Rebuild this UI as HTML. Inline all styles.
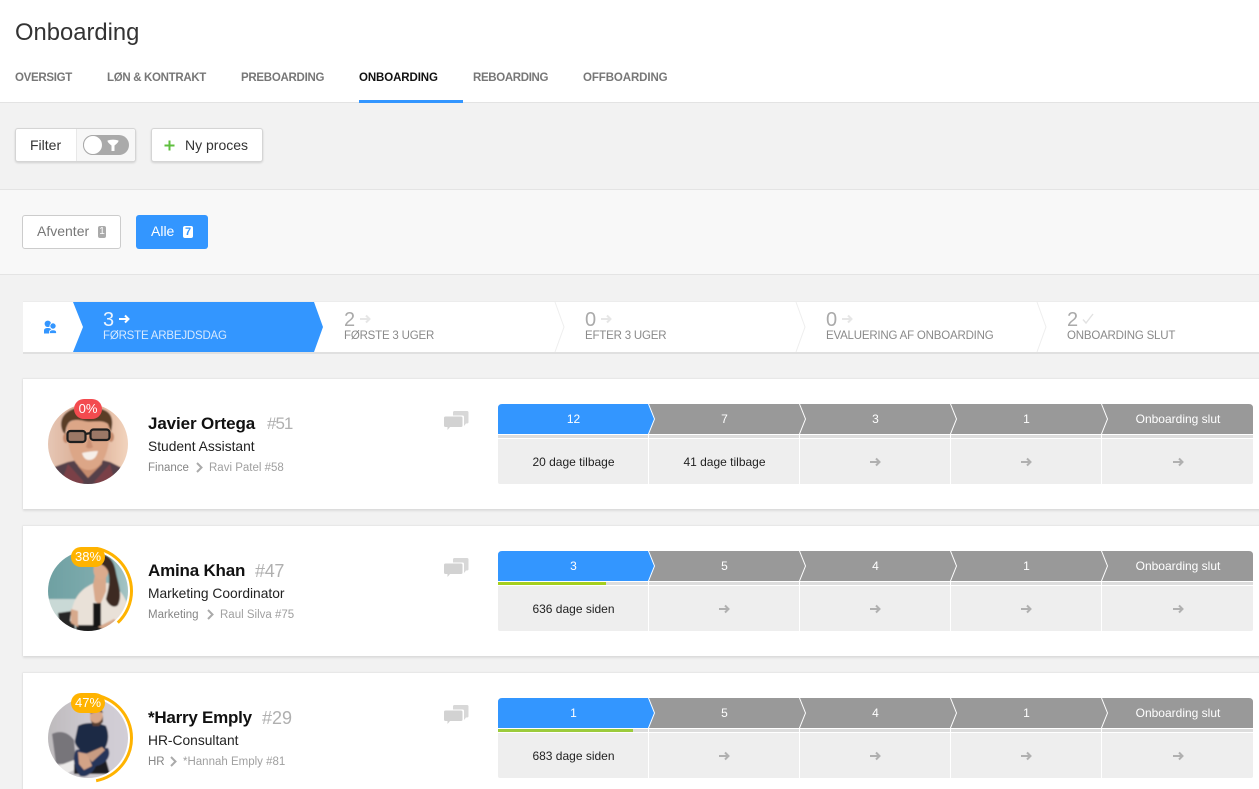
<!DOCTYPE html>
<html lang="da"><head><meta charset="utf-8"><title>Onboarding</title>
<style>
*{box-sizing:border-box}
html,body{margin:0;padding:0;width:1259px;height:789px;overflow:hidden}
body{background:#f2f2f2;font-family:"Liberation Sans",Arial,sans-serif;color:#222}
#w{position:relative;width:1259px;height:789px;overflow:hidden;background:#f2f2f2}
.a{position:absolute;white-space:nowrap}
.tab{top:71px;height:14px;line-height:14px;font-size:11.5px;font-weight:bold;color:#777}
.btn{background:#fff;border:1px solid #d5d5d5;border-radius:3px;box-shadow:0 1px 2px rgba(0,0,0,.14)}
.st{top:310px;font-size:20px;line-height:20px;color:#aaa}
.sl{top:329px;font-size:11.5px;line-height:14px;color:#8a8a8a;letter-spacing:-.2px}
.card{left:23px;width:1240px;height:131px;background:#fff;border-top:1px solid #e8e8e8;box-shadow:0 2px 2px rgba(0,0,0,.09),-1px 0 1px rgba(0,0,0,.04)}
.nm{font-size:17px;font-weight:bold;line-height:20px;color:#111;letter-spacing:-.12px}
.id{font-size:18px;line-height:20px;color:#b0b0b0;letter-spacing:-.3px}
.ti{font-size:13.8px;line-height:18px;color:#222}
.bc{font-size:11.5px;line-height:14px;color:#a0a0a0}
.bd{color:#858585}
.pc{font-size:13px;line-height:20px;color:#fff;text-align:center}
</style></head><body><div id="w">

<div class="a" style="left:0;top:0;width:1259px;height:103px;background:#fff;border-bottom:1px solid #e3e3e3"></div>
<div class="a" style="left:15px;top:19px;font-size:23.800px;line-height:28px;color:#333">Onboarding</div>
<div class="a tab" style="left:15px;letter-spacing:-.3px">OVERSIGT</div>
<div class="a tab" style="left:107px;letter-spacing:-.32px">LØN &amp; KONTRAKT</div>
<div class="a tab" style="left:241px;letter-spacing:-.28px">PREBOARDING</div>
<div class="a tab" style="left:359px;color:#111;letter-spacing:-.1px">ONBOARDING</div>
<div class="a tab" style="left:473px;letter-spacing:-.35px">REBOARDING</div>
<div class="a tab" style="left:583px;letter-spacing:-.1px">OFFBOARDING</div>
<div class="a" style="left:359px;top:100px;width:104px;height:3px;background:#3396ff"></div>

<div class="a" style="left:0;top:189px;width:1259px;height:86px;background:#f8f8f8;border-top:1px solid #e4e4e4;border-bottom:1px solid #e4e4e4"></div>

<div class="a btn" style="left:15px;top:128px;width:121px;height:34px"></div>
<div class="a" style="left:76px;top:129px;width:59px;height:32px;background:#f7f7f7;border-left:1px solid #e8e8e8;border-radius:0 3px 3px 0"></div>
<div class="a" style="left:30px;top:136px;font-size:14px;line-height:18px;color:#333">Filter</div>
<div class="a" style="left:83px;top:135px;width:46px;height:20px;border-radius:10px;background:#aaa"></div>
<div class="a" style="left:83px;top:135px;width:20px;height:20px;border-radius:50%;background:#fff;border:1px solid #aaa"></div>
<svg class="a" style="left:106px;top:138px" width="15" height="14" viewBox="0 0 15 14"><path d="M1.500 2.500Q7 .8 12.500 2.500Q13 4 8.500 7.500V13H5.500V7.500Q1 4 1.500 2.500Z" fill="#fff"/></svg>

<div class="a btn" style="left:151px;top:128px;width:112px;height:34px"></div>
<svg class="a" style="left:164px;top:140px" width="11" height="11" viewBox="0 0 11 11"><path d="M5.500 .5V10.500M.5 5.500H10.500" stroke="#5fbf3f" stroke-width="2" fill="none"/></svg>
<div class="a" style="left:185px;top:136px;font-size:14px;line-height:18px;color:#333">Ny proces</div>

<div class="a" style="left:22px;top:215px;width:99px;height:34px;background:#fff;border:1px solid #ccc;border-radius:3px"></div>
<div class="a" style="left:37px;top:222px;font-size:14px;line-height:18px;color:#777">Afventer</div>
<div class="a" style="left:98px;top:226px;width:8px;height:12px;background:#aaa;border-radius:2px;color:#fff;font-size:10px;line-height:12px;text-align:center">1</div>
<div class="a" style="left:136px;top:215px;width:72px;height:34px;background:#3396ff;border-radius:3px"></div>
<div class="a" style="left:151px;top:222px;font-size:14px;line-height:18px;color:#fff">Alle</div>
<div class="a" style="left:183px;top:226px;width:10px;height:12px;background:#fff;border-radius:2px;color:#3396ff;font-size:11px;font-weight:bold;line-height:12px;text-align:center">7</div>

<!-- stage bar -->
<svg class="a" style="left:23px;top:301px" width="1236" height="54" viewBox="0 0 1236 54">
<rect x="0" y="51" width="1240" height="2" fill="#000" opacity=".07"/>
<rect x="0" y="1" width="1240" height="50" fill="#fff"/>
<rect x="0" y="0" width="1240" height="1" fill="#ececec"/>
<path d="M50 1H291L300 26 291 51H50L60 26Z" fill="#3396ff"/>
<path d="M532 1L541 26 532 51M773 1L782 26 773 51M1014 1L1023 26 1014 51" fill="none" stroke="#eeeeee"/>
<circle cx="24.800" cy="22.800" r="3.200" fill="#3396ff"/>
<path d="M21 32.500V29.500Q21 27 24.800 27 28.500 27 28.500 29.500V32.500Z" fill="#3396ff"/>
<circle cx="30" cy="25" r="3.100" fill="#3396ff" stroke="#fff" stroke-width=".8"/>
<path d="M26.500 32.500V31Q26.500 28.800 30 28.800 33.500 28.800 33.500 31V32.500Z" fill="#3396ff" stroke="#fff" stroke-width=".8"/>
<g fill="none" stroke-width="2">
<path d="M96 18H105M102 14.500L105.500 18 102 21.500" stroke="#fff"/>
<path d="M337 18H346M343 14.500L346.500 18 343 21.500" stroke="#e6e6e6"/>
<path d="M578 18H587M584 14.500L587.500 18 584 21.500" stroke="#e6e6e6"/>
<path d="M819 18H828M825 14.500L828.500 18 825 21.500" stroke="#e6e6e6"/>
<path d="M1060 18.500L1063 22 1070 13" stroke="#e2e2e2" stroke-width="1.400"/>
</g>
</svg>
<div class="a st" style="left:103px;color:#eaf4ff">3</div>
<div class="a sl" style="left:103px;color:#d6e9ff">FØRSTE ARBEJDSDAG</div>
<div class="a st" style="left:344px">2</div>
<div class="a sl" style="left:344px">FØRSTE 3 UGER</div>
<div class="a st" style="left:585px">0</div>
<div class="a sl" style="left:585px">EFTER 3 UGER</div>
<div class="a st" style="left:826px">0</div>
<div class="a sl" style="left:826px">EVALUERING AF ONBOARDING</div>
<div class="a st" style="left:1067px">2</div>
<div class="a sl" style="left:1067px">ONBOARDING SLUT</div>

<!-- CARD 1 -->
<div class="a card" style="top:378px"></div>
<svg class="a" style="left:48px;top:404px" width="80" height="80" viewBox="0 0 80 80">
<defs><clipPath id="c1"><circle cx="40" cy="40" r="40"/></clipPath>
<filter id="s" x="-10%" y="-10%" width="120%" height="120%"><feGaussianBlur stdDeviation=".7"/></filter>
<linearGradient id="b1" x1="0" x2="1"><stop offset="0" stop-color="#e6c8b6"/><stop offset=".5" stop-color="#d9a88e"/><stop offset="1" stop-color="#f3d6c0"/></linearGradient></defs>
<g clip-path="url(#c1)"><g filter="url(#s)">
<rect x="-2" y="-2" width="84" height="84" fill="url(#b1)"/>
<path d="M-2 82V66L20 58 30 56H54L62 58 82 68V82Z" fill="#54404a"/>
<path d="M20 60L36 78 30 82H12ZM62 60L46 78 52 82H68Z" fill="#7a3f46"/>
<path d="M30 50V62L40 74 54 60V50Z" fill="#c68c6e"/>
<path d="M19 22C19 50 28 66 41 66S62 48 62 22C58 12 26 10 19 22Z" fill="#dca687"/>
<ellipse cx="18" cy="34" rx="3" ry="5" fill="#c48a6c"/><ellipse cx="63" cy="33" rx="3" ry="5" fill="#c48a6c"/>
<path d="M15 28C8 12 22 2 40 3S68 8 63 28L60 20C54 15 44 19 36 17 28 15 22 16 20 20 18 23 18 26 17 30Z" fill="#5a3d27"/>
<path d="M41 32L38 43Q41 46 45 43Z" fill="#c98f72"/>
<path d="M34 49Q43 47 50 47 48 56 41 56 36 56 34 49Z" fill="#f6eee8"/>
</g>
<rect x="19.500" y="27" width="18" height="11" rx="3" fill="#9c7866" stroke="#1e1e1e" stroke-width="2.200"/>
<rect x="42.500" y="25.500" width="19" height="10.500" rx="3" fill="#9c7866" stroke="#1e1e1e" stroke-width="2.200"/>
<path d="M37 30L43 29" stroke="#1e1e1e" stroke-width="2.200"/>
</g></svg>
<div class="a pc" style="left:74px;top:399px;width:28px;height:20px;background:#f34b4f;border-radius:10px">0%</div>
<div class="a nm" style="left:148px;top:414px">Javier Ortega</div>
<div class="a id" style="left:267px;top:414px;font-size:17px;letter-spacing:-1px">#51</div>
<div class="a ti" style="left:148px;top:438px">Student Assistant</div>
<div class="a bc bd" style="left:148px;top:461px">Finance</div>
<svg class="a" style="left:196px;top:462px" width="7" height="11" viewBox="0 0 7 11"><path d="M1 1L5.500 5.500 1 10" fill="none" stroke="#aaa" stroke-width="2"/></svg>
<div class="a bc" style="left:209px;top:461px">Ravi Patel #58</div>
<svg class="a" style="left:444px;top:411px" width="25" height="20" viewBox="0 0 25 20"><path d="M11 0H23a1.500 1.500 0 0 1 1.500 1.500V11a1.500 1.500 0 0 1-1.500 1.500H22L20 15V6a1.500 1.500 0 0 0-1.500-1.500H9V1.500A1.500 1.500 0 0 1 11 0Z" fill="#d8d8d8"/><path d="M1.500 5.500H17A1.500 1.500 0 0 1 18.500 7V14.500A1.500 1.500 0 0 1 17 16H6L3.500 19V16H1.500A1.500 1.500 0 0 1 0 14.500V7A1.500 1.500 0 0 1 1.500 5.500Z" fill="#d2d2d2"/></svg>

<svg class="a" style="left:498px;top:404px" width="755" height="80" viewBox="0 0 755 80">
<path d="M151 0H751Q755 0 755 4V30H151Z" fill="#999"/>
<path d="M0 30V4Q0 0 4 0H151L157 15 151 30Z" fill="#3396ff"/>
<rect y="31" width="755" height="3" fill="#ddd"/>
<path d="M0 34H755V78Q755 80 753 80H2Q0 80 0 78Z" fill="#eee"/>
<path d="M0 30.500H755M0 34.500H755" stroke="#fff" stroke-width="1"/>
<path d="M150.500 0L156.500 15 150.500 30V80M301.500 0L307.500 15 301.500 30V80M452.500 0L458.500 15 452.500 30V80M603.500 0L609.500 15 603.500 30V80" fill="none" stroke="#fff" stroke-width="1"/>
<g fill="none" stroke="#b0b0b0" stroke-width="2"><path d="M372 58H381M378 54.500L381.500 58 378 61.500"/><path d="M523 58H532M529 54.500L532.500 58 529 61.500"/><path d="M675 58H684M681 54.500L684.500 58 681 61.500"/></g>
<g font-family="Liberation Sans,sans-serif" font-size="12" fill="#fff" text-anchor="middle"><text x="75.500" y="19">12</text><text x="226.500" y="19">7</text><text x="377.500" y="19">3</text><text x="528.500" y="19">1</text><text x="680" y="19">Onboarding slut</text></g>
<g font-family="Liberation Sans,sans-serif" font-size="12" fill="#222" text-anchor="middle"><text x="75.500" y="62">20 dage tilbage</text><text x="226.500" y="62">41 dage tilbage</text></g>
</svg>

<!-- CARD 2 -->
<div class="a card" style="top:525px"></div>
<svg class="a" style="left:44px;top:547px" width="90" height="90" viewBox="-4 -4 90 90">
<defs><clipPath id="c2"><circle cx="40" cy="40" r="40"/></clipPath>
<linearGradient id="b2" x1="0" x2="1"><stop offset="0" stop-color="#6ea0a2"/><stop offset=".6" stop-color="#7eabad"/><stop offset="1" stop-color="#a8c6c6"/></linearGradient></defs>
<g clip-path="url(#c2)"><g filter="url(#s)">
<rect x="-2" y="-2" width="84" height="84" fill="url(#b2)"/>
<rect x="-2" y="48" width="40" height="34" fill="#c9d9d6"/>
<path d="M10 62L24 60 28 82H12Z" fill="#252525"/>
<path d="M28 82V74L56 74 60 82Z" fill="#1b1b1b"/>
<path d="M22 70C24 52 28 40 46 32L60 32C70 36 78 44 82 62V82L60 74 54 74H30Z" fill="#e9e1d8"/>
<path d="M23 58L30 60 30 76 23 72Z" fill="#d7a98c"/>
<path d="M47 24L58 24 58 40 52 54 47 50 45 34Z" fill="#d8a98c"/>
<path d="M45 52H53V76H45Z" fill="#161616"/>
<path d="M50 76L66 68 70 71 56 78Z" fill="#d7a98c"/>
<ellipse cx="53" cy="19" rx="7.500" ry="10" fill="#dcab8d"/>
<path d="M48 6C58 0 66 8 68 22 70 32 75 44 70 54 66 58 60 54 58 48 60 40 63 30 60 20 57 14 52 12 47 13Z" fill="#3c2a20"/>
</g></g>
<circle cx="40" cy="40" r="43.500" fill="none" stroke="#ffb300" stroke-width="3" pathLength="100" stroke-dasharray="38 100" transform="rotate(-90 40 40)"/>
</svg>
<div class="a pc" style="left:71px;top:547px;width:34px;height:20px;background:#ffb300;border-radius:10px">38%</div>
<div class="a nm" style="left:148px;top:561px;letter-spacing:-.2px">Amina Khan</div>
<div class="a id" style="left:255px;top:561px">#47</div>
<div class="a ti" style="left:148px;top:585px">Marketing Coordinator</div>
<div class="a bc bd" style="left:148px;top:608px">Marketing</div>
<svg class="a" style="left:207px;top:609px" width="7" height="11" viewBox="0 0 7 11"><path d="M1 1L5.500 5.500 1 10" fill="none" stroke="#aaa" stroke-width="2"/></svg>
<div class="a bc" style="left:220px;top:608px">Raul Silva #75</div>
<svg class="a" style="left:444px;top:558px" width="25" height="20" viewBox="0 0 25 20"><path d="M11 0H23a1.500 1.500 0 0 1 1.500 1.500V11a1.500 1.500 0 0 1-1.500 1.500H22L20 15V6a1.500 1.500 0 0 0-1.500-1.500H9V1.500A1.500 1.500 0 0 1 11 0Z" fill="#d8d8d8"/><path d="M1.500 5.500H17A1.500 1.500 0 0 1 18.500 7V14.500A1.500 1.500 0 0 1 17 16H6L3.500 19V16H1.500A1.500 1.500 0 0 1 0 14.500V7A1.500 1.500 0 0 1 1.500 5.500Z" fill="#d2d2d2"/></svg>

<svg class="a" style="left:498px;top:551px" width="755" height="80" viewBox="0 0 755 80">
<path d="M151 0H751Q755 0 755 4V30H151Z" fill="#999"/>
<path d="M0 30V4Q0 0 4 0H151L157 15 151 30Z" fill="#3396ff"/>
<rect y="31" width="755" height="3" fill="#ddd"/>
<rect y="31" width="108" height="3" fill="#a5cf1f"/>
<path d="M0 34H755V78Q755 80 753 80H2Q0 80 0 78Z" fill="#eee"/>
<path d="M0 30.500H755M0 34.500H755" stroke="#fff" stroke-width="1"/>
<path d="M150.500 0L156.500 15 150.500 30V80M301.500 0L307.500 15 301.500 30V80M452.500 0L458.500 15 452.500 30V80M603.500 0L609.500 15 603.500 30V80" fill="none" stroke="#fff" stroke-width="1"/>
<g fill="none" stroke="#b0b0b0" stroke-width="2"><path d="M221 58H230M227 54.500L230.500 58 227 61.500"/><path d="M372 58H381M378 54.500L381.500 58 378 61.500"/><path d="M523 58H532M529 54.500L532.500 58 529 61.500"/><path d="M675 58H684M681 54.500L684.500 58 681 61.500"/></g>
<g font-family="Liberation Sans,sans-serif" font-size="12" fill="#fff" text-anchor="middle"><text x="75.500" y="19">3</text><text x="226.500" y="19">5</text><text x="377.500" y="19">4</text><text x="528.500" y="19">1</text><text x="680" y="19">Onboarding slut</text></g>
<text x="75.500" y="62" font-family="Liberation Sans,sans-serif" font-size="12" fill="#222" text-anchor="middle">636 dage siden</text>
</svg>

<!-- CARD 3 -->
<div class="a card" style="top:672px"></div>
<svg class="a" style="left:44px;top:694px" width="90" height="90" viewBox="-4 -4 90 90">
<defs><clipPath id="c3"><circle cx="40" cy="40" r="40"/></clipPath>
<linearGradient id="b3" x1="0" x2="1"><stop offset="0" stop-color="#bdbabc"/><stop offset=".5" stop-color="#cdc9cf"/><stop offset="1" stop-color="#d2ced7"/></linearGradient></defs>
<g clip-path="url(#c3)"><g filter="url(#s)">
<rect x="-2" y="-2" width="84" height="84" fill="url(#b3)"/>
<path d="M4 36C12 32 20 34 26 42L28 66 8 66Z" fill="#77757a"/>
<path d="M10 68L26 62 30 70 18 76Z" fill="#ebe9e8"/>
<path d="M26 66L58 62 62 76H26Z" fill="#1d1d20"/>
<path d="M28 52C36 50 50 50 60 50 64 58 58 66 48 68 44 76 38 80 32 78 26 70 24 60 28 52Z" fill="#26365a"/>
<path d="M30 28C36 24 50 24 58 28 62 38 60 46 56 52L48 56 34 54C30 50 26 46 27 42Z" fill="#1e2a44"/>
<path d="M30 54L40 56 44 68 36 72 31 66Z" fill="#d3a387"/>
<path d="M38 56L54 49 57 52 44 64Z" fill="#c99c82"/>
<ellipse cx="48.500" cy="19" rx="6.500" ry="8" fill="#d8a88a"/>
<path d="M42 20C44 27 53 27 55 18V24L51 28H45Z" fill="#5a4030"/>
<path d="M42 16C44 9 54 9 55 15L50 13 44 15Z" fill="#4a3426"/>
</g></g>
<circle cx="40" cy="40" r="43.500" fill="none" stroke="#ffb300" stroke-width="3" pathLength="100" stroke-dasharray="47 100" transform="rotate(-90 40 40)"/>
</svg>
<div class="a pc" style="left:71px;top:693px;width:34px;height:20px;background:#ffb300;border-radius:10px">47%</div>
<div class="a nm" style="left:148px;top:708px;letter-spacing:-.25px">*Harry Emply</div>
<div class="a id" style="left:262px;top:708px;letter-spacing:0">#29</div>
<div class="a ti" style="left:148px;top:732px">HR-Consultant</div>
<div class="a bc bd" style="left:148px;top:755px">HR</div>
<svg class="a" style="left:170px;top:756px" width="7" height="11" viewBox="0 0 7 11"><path d="M1 1L5.500 5.500 1 10" fill="none" stroke="#aaa" stroke-width="2"/></svg>
<div class="a bc" style="left:183px;top:755px">*Hannah Emply #81</div>
<svg class="a" style="left:444px;top:705px" width="25" height="20" viewBox="0 0 25 20"><path d="M11 0H23a1.500 1.500 0 0 1 1.500 1.500V11a1.500 1.500 0 0 1-1.500 1.500H22L20 15V6a1.500 1.500 0 0 0-1.500-1.500H9V1.500A1.500 1.500 0 0 1 11 0Z" fill="#d8d8d8"/><path d="M1.500 5.500H17A1.500 1.500 0 0 1 18.500 7V14.500A1.500 1.500 0 0 1 17 16H6L3.500 19V16H1.500A1.500 1.500 0 0 1 0 14.500V7A1.500 1.500 0 0 1 1.500 5.500Z" fill="#d2d2d2"/></svg>

<svg class="a" style="left:498px;top:698px" width="755" height="80" viewBox="0 0 755 80">
<path d="M151 0H751Q755 0 755 4V30H151Z" fill="#999"/>
<path d="M0 30V4Q0 0 4 0H151L157 15 151 30Z" fill="#3396ff"/>
<rect y="31" width="755" height="3" fill="#ddd"/>
<rect y="31" width="135" height="3" fill="#9ccb3b"/>
<path d="M0 34H755V78Q755 80 753 80H2Q0 80 0 78Z" fill="#eee"/>
<path d="M0 30.500H755M0 34.500H755" stroke="#fff" stroke-width="1"/>
<path d="M150.500 0L156.500 15 150.500 30V80M301.500 0L307.500 15 301.500 30V80M452.500 0L458.500 15 452.500 30V80M603.500 0L609.500 15 603.500 30V80" fill="none" stroke="#fff" stroke-width="1"/>
<g fill="none" stroke="#b0b0b0" stroke-width="2"><path d="M221 58H230M227 54.500L230.500 58 227 61.500"/><path d="M372 58H381M378 54.500L381.500 58 378 61.500"/><path d="M523 58H532M529 54.500L532.500 58 529 61.500"/><path d="M675 58H684M681 54.500L684.500 58 681 61.500"/></g>
<g font-family="Liberation Sans,sans-serif" font-size="12" fill="#fff" text-anchor="middle"><text x="75.500" y="19">1</text><text x="226.500" y="19">5</text><text x="377.500" y="19">4</text><text x="528.500" y="19">1</text><text x="680" y="19">Onboarding slut</text></g>
<text x="75.500" y="62" font-family="Liberation Sans,sans-serif" font-size="12" fill="#222" text-anchor="middle">683 dage siden</text>
</svg>
</div></body></html>
